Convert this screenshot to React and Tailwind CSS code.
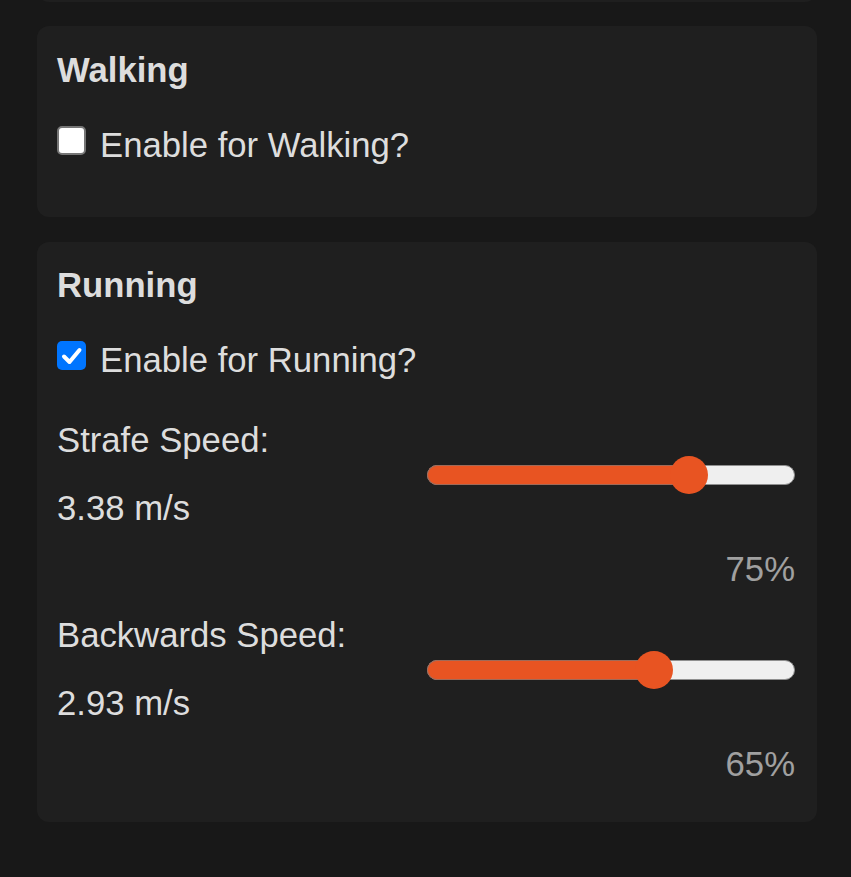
import React from 'react';

const font = { fontFamily: '"Liberation Sans", Arial, sans-serif' };

const Checkbox = ({ checked }) =>
  checked ? (
    <span className="flex h-[29px] w-[29px] shrink-0 items-center justify-center rounded-[5px] bg-[#0075ff]">
      <svg viewBox="0 0 29 29" className="h-[29px] w-[29px]">
        <path d="M7 15.5 L12.5 21 L22.5 9" fill="none" stroke="#ffffff" strokeWidth="4" strokeLinecap="round" strokeLinejoin="round" />
      </svg>
    </span>
  ) : (
    <span className="block h-[29px] w-[29px] shrink-0 rounded-[5px] border-2 border-[#767676] bg-white" />
  );

const Slider = ({ value }) => {
  // the thumb travels a little less than the full track
  const pos = `${value * 0.95}%`;
  return (
    <div className="relative h-[20px] w-full">
      <div className="absolute inset-0 rounded-full border border-[#8f8f8f] bg-[#efefef]" />
      <div
        className="absolute top-0 left-0 h-[20px] rounded-l-full border border-r-0 border-[#a06a58] bg-[#e85422]"
        style={{ width: pos }}
      />
      <div
        className="absolute top-1/2 h-[38px] w-[38px] -translate-x-1/2 -translate-y-1/2 rounded-full bg-[#e85422]"
        style={{ left: pos }}
      />
    </div>
  );
};

const SpeedRow = ({ label, speed, percent, className }) => (
  <div className={className}>
    <div className="flex items-center">
      <div className="flex-1">
        <div>{label}</div>
        <div className="mt-[29px]">{speed}</div>
      </div>
      <div className="w-[368px]">
        <Slider value={percent} />
      </div>
    </div>
    <div className="mt-[22px] text-right text-[#a0a0a0]">{percent}%</div>
  </div>
);

const ToggleRow = ({ label, checked }) => (
  <label className="flex items-start gap-[14px]">
    <Checkbox checked={checked} />
    <span>{label}</span>
  </label>
);

export default function App() {
  return (
    <div className="min-h-[877px] overflow-hidden bg-[#181818] text-[34.7px] leading-[39px] text-[#dddddd]" style={font}>
      <div className="ml-[37px] w-[780px]">
        <div className="-mt-[40px] h-[42px] rounded-xl bg-[#1f1f1f]" />

        <section className="mt-[24px] rounded-xl bg-[#1f1f1f] pt-[25px] pr-[22px] pb-[52px] pl-[20px]">
          <h3 className="font-bold">Walking</h3>
          <div className="mt-[36px]">
            <ToggleRow label="Enable for Walking?" checked={false} />
          </div>
        </section>

        <section className="mt-[25px] rounded-xl bg-[#1f1f1f] pt-[24px] pr-[22px] pb-[38px] pl-[20px]">
          <h3 className="font-bold">Running</h3>
          <div className="mt-[36px]">
            <ToggleRow label="Enable for Running?" checked={true} />
          </div>
          <SpeedRow className="mt-[41px]" label="Strafe Speed:" speed="3.38 m/s" percent={75} />
          <SpeedRow className="mt-[27px]" label="Backwards Speed:" speed="2.93 m/s" percent={65} />
        </section>
      </div>
    </div>
  );
}
